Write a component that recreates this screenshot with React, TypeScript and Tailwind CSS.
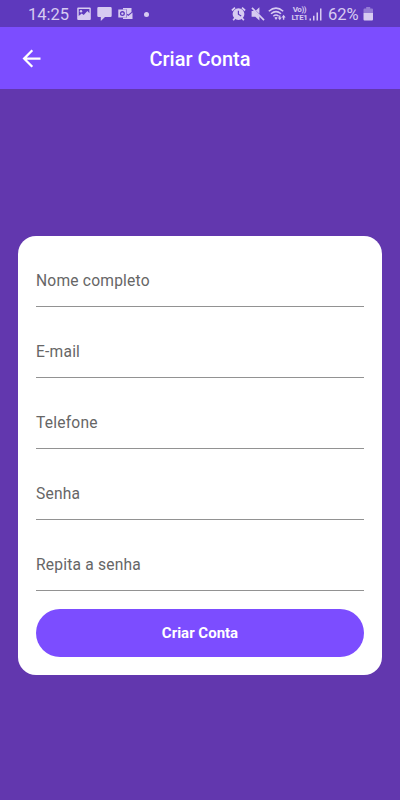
import type { ReactNode } from 'react'

const fields = ['Nome completo', 'E-mail', 'Telefone', 'Senha', 'Repita a senha']

function StatusIcon({ width, className = '', children }: { width: number; className?: string; children: ReactNode }) {
  return (
    <svg width={width} height="16" viewBox={`0 0 ${width} 16`} fill="currentColor" className={`shrink-0 ${className}`}>
      {children}
    </svg>
  )
}

function StatusBar() {
  return (
    <div className="flex h-[27px] items-center bg-[#5e39bd] pl-[28px] pr-[26px] pt-px text-[#d7cbf1]">
      <span className="w-[42px] whitespace-nowrap pt-[2px] text-[16.5px] leading-none">14:25</span>

      {/* picture */}
      <StatusIcon width={14} className="ml-[7px]">
        <path fillRule="evenodd" d="M1.2 1.500h11.6q1 0 1 1v10.6q0 1-1 1H1.2q-1 0-1-1V2.500q0-1 1-1ZM1.700 3v7l3-2.600 2 1.600 3.700-4 2 2.200V3Z" />
        <circle cx="4" cy="5.200" r="1.200" />
      </StatusIcon>
      {/* message */}
      <StatusIcon width={15} className="ml-[6px]">
        <path d="M1.500 1h12q1.200 0 1.200 1.200v7.600q0 1.200-1.200 1.200H8l-4.200 4V11H1.500Q.3 11 .3 9.800V2.200Q.3 1 1.500 1Z" />
      </StatusIcon>
      {/* outlook */}
      <StatusIcon width={15} className="ml-[6px]">
        <path d="M5 2h8.500v4L10.300 8.500 9 7.700V3.400H5ZM9 9l1.300.9L14.500 6.600V13H5v-1.400h4Z" />
        <path fillRule="evenodd" d="M.3 3.600h8.200v8H.3ZM4.400 5.100a2.500 2.500 0 1 0 0 5a2.500 2.500 0 0 0 0-5Zm0 1.300a1.200 1.200 0 1 1 0 2.400a1.200 1.200 0 0 1 0-2.400Z" />
      </StatusIcon>
      <span className="ml-[11px] size-[5px] rounded-full bg-current" />

      <div className="ml-auto flex items-center">
        {/* alarm */}
        <StatusIcon width={15}>
          <path fillRule="evenodd" d="M7.500 2.200a5.900 5.900 0 1 0 0 11.800a5.900 5.900 0 0 0 0-11.800ZM6.800 4.800H8v3.200l2.500 1.500-.6 1-3.100-1.900Z" />
          <g fill="none" stroke="currentColor" strokeWidth="1.700">
            <path d="M.9 4.500 4 1.700M14.100 4.500 11 1.700" />
            <path d="m4 12-1.800 2.300M11 12l1.800 2.300" />
          </g>
        </StatusIcon>
        {/* muted */}
        <StatusIcon width={14} className="ml-[5px]">
          <path d="M.6 5h2.900l4.900 4.900v4.600L4.300 10.800H.6ZM8.400 1.200v6.500L4.900 4.400Z" />
          <path d="m1 1.900 12 12.200" stroke="currentColor" strokeWidth="1.700" />
        </StatusIcon>
        {/* wifi */}
        <StatusIcon width={19} className="ml-[3px]">
          <g fill="none" stroke="currentColor" strokeWidth="1.500">
            <path d="M.8 5.300q7.200-6.400 14.400 0" />
            <path d="M3 7.800q5-4.400 10 0" />
            <path d="M5.300 10.200q2.700-2.300 5.400 0" />
          </g>
          <path d="m8 14-1.600-2.300q1.600-1.200 3.200 0ZM9.800 11.500h1.300V9.500h1.300v2h1.300L11.800 14.300ZM15.600 8.800l2 2.800h-1.300v2.200h-1.400v-2.200h-1.300Z" />
        </StatusIcon>
        <span className="ml-[4px] flex w-[17px] flex-col items-center whitespace-nowrap text-[8px] font-bold leading-[8.500px]">
          <span className="tracking-[-0.4px]">Vo))</span>
          <span className="text-[7.800px] tracking-[-0.2px]">LTE1</span>
        </span>
        {/* signal */}
        <StatusIcon width={14} className="ml-px">
          <path d="M.5 12.500h1.500v2H.5ZM4 9.800h1.500v4.700H4ZM7.500 6.500h1.500v8H7.500ZM11 2.500h1.500v12H11Z" />
        </StatusIcon>
        <span className="ml-[5px] w-[31px] whitespace-nowrap pt-[2px] text-[16.500px] leading-none">62%</span>
        {/* battery */}
        <StatusIcon width={11} className="ml-[4px]">
          <path d="M3.200 1h4v1.500H9q1 0 1 1V7H.5V3.500q0-1 1-1h1.700Z" opacity=".45" />
          <path d="M.5 7H10v6.500q0 1-1 1H1.500q-1 0-1-1Z" />
        </StatusIcon>
      </div>
    </div>
  )
}

function Header() {
  return (
    <header className="grid h-[62px] grid-cols-[48px_1fr_48px] items-center bg-[#7c4dff] text-white">
      <button className="flex justify-end pr-[3px]" aria-label="Voltar">
        <svg width="27" height="27" viewBox="0 0 24 24" fill="currentColor">
          <path d="M20 11H7.830l5.590-5.590L12 4l-8 8 8 8 1.410-1.410L7.830 13H20v-2z" />
        </svg>
      </button>
      <h1 className="pt-px text-center text-[20px] font-medium leading-none">Criar Conta</h1>
    </header>
  )
}

export default function App() {
  return (
    <div className="flex h-[800px] w-[400px] flex-col overflow-hidden bg-[#6237ae] font-['Roboto',sans-serif]">
      <StatusBar />
      <Header />
      <main className="px-[18px] pt-[147px]">
        <form className="flex flex-col gap-[18px] rounded-[18px] bg-white p-[18px]">
          {fields.map((field) => (
            <label key={field} className="flex h-[53px] items-center border-b border-[#929292] pt-[3px] text-[15.600px] tracking-[0.2px] text-[#666666]">
              {field}
            </label>
          ))}
          <button type="button" className="h-[48px] rounded-full bg-[#7c4dff] pt-px text-[15px] font-bold text-white">
            Criar Conta
          </button>
        </form>
      </main>
    </div>
  )
}
